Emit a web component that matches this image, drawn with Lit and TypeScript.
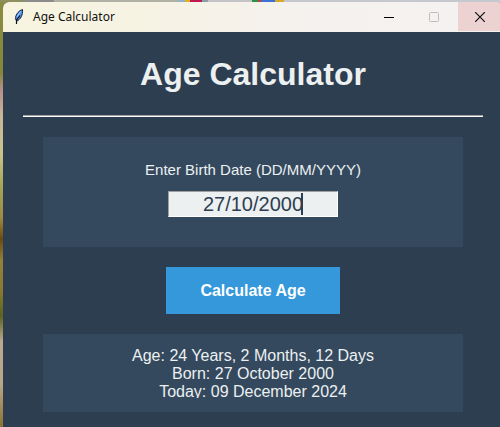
import { LitElement, html, css } from "lit";
import { customElement, state } from "lit/decorators.js";

@customElement("title-bar")
class TitleBar extends LitElement {
  static styles = css`
    :host {
      display: flex;
      height: 30px;
      background: linear-gradient(90deg, #f7f4df 0, #f6f3e3 25%, #f5f1ee 60%, #f4f2f1 100%);
      color: #111;
      font: 12px/30px "Noto Sans", sans-serif;
    }
    .name {
      display: flex;
      flex: 1;
      align-items: center;
      gap: 6px;
      padding-left: 10px;
    }
    button {
      box-sizing: border-box;
      width: 45px;
      padding: 0 4px 0 0;
      border: 0;
      background: none;
      color: #111;
      display: grid;
      place-items: center;
    }
    .close {
      height: 29px;
      padding-right: 2px;
      background: #edd2d2;
    }
    svg {
      display: block;
    }
  `;
  render() {
    return html`
      <div class="name">
        <svg width="14" height="18" viewBox="0 0 14 18" aria-hidden="true">
          <path d="M9.500 1.500 C6 2.500 3 6 2.500 9.500 C2.300 11 2.800 12.500 4 13 C7.500 11.500 10 7 9.500 1.500Z" fill="#4f95ee" stroke="#182336"/>
          <path d="M7.500 3.500 L4 9" stroke="#b5d6ff"/>
          <path d="M7 7.500 L3.500 12 V16" fill="none" stroke="#0c1018" stroke-width="1.200"/>
        </svg>
        <span>Age Calculator</span>
      </div>
      <button aria-label="Minimize">
        <svg width="10" height="10" viewBox="0 0 10 10"><path d="M0 5.500H10" stroke="#000" /></svg>
      </button>
      <button aria-label="Maximize" disabled>
        <svg width="10" height="10" viewBox="0 0 10 10"><rect x=".5" y=".5" width="9" height="9" rx="1" fill="none" stroke="#bdbdbc" /></svg>
      </button>
      <button class="close" aria-label="Close">
        <svg width="10" height="10" viewBox="0 0 10 10"><path d="M0 0L10 10M10 0L0 10" stroke="#111" stroke-width="1.200" /></svg>
      </button>
    `;
  }
}

@customElement("app-root")
class AppRoot extends LitElement {
  @state() private birthDate = "27/10/2000";

  static styles = css`
    :host {
      display: block;
      box-sizing: border-box;
      min-height: 100vh;
      overflow: hidden;
      background: linear-gradient(#8a8d3f 0, #85863c 17%, #b58f88 21%, #c9b59a 27%, #c8c48a 36%, #a3a355 44%, #a08a45 51%, #6a4a12 56%, #94803c 61%, #8a7a30 68%, #5c6420 74%, #bda890 80%, #b8a688 90%, #8a7430 100%);
      font-family: "Liberation Sans", Arial, sans-serif;
    }
    .backdrop {
      height: 2px;
      background: linear-gradient(90deg,
        #8f9060 0 24px, #8c8c8c 24px 54px, #b0b0a4 54px 178px,
        #8fb4c8 178px 185px, #e0b020 185px 190px, #c01850 190px 202px,
        #8aa0a8 202px 208px, #c4c4c8 208px 252px, #2c9048 252px 258px,
        #d03a28 258px 261px, #3a70d8 261px 275px, #d8a828 275px 284px,
        #c6c8d0 284px 100%);
    }
    .window {
      display: flex;
      flex-direction: column;
      min-height: calc(100vh - 2px);
      margin: 0 -3px 0 3px;
      border-radius: 6px 6px 0 0;
      overflow: hidden;
      background: #2c3e50;
      color: #ecf0f1;
    }
    main {
      display: flex;
      flex-direction: column;
      align-items: center;
      padding: 20px 20px 0;
    }
    h1 {
      margin: 0;
      font-size: 32px;
      line-height: 44px;
    }
    hr {
      align-self: stretch;
      height: 0;
      margin: 19px 0 20px;
      border: 0;
      border-top: 1px solid #a0a0a0;
      border-bottom: 1px solid #fff;
    }
    .panel {
      align-self: stretch;
      margin: 0 20px;
      background: #34495e;
      text-align: center;
      font-size: 16px;
    }
    .form {
      display: flex;
      flex-direction: column;
      align-items: center;
      gap: 10px;
      padding: 22px 20px 30px;
    }
    label {
      font-size: 15px;
      line-height: 22px;
    }
    .field {
      position: relative;
      display: flex;
    }
    .field::after {
      content: "";
      position: absolute;
      left: calc(50% + 48px);
      top: 2px;
      bottom: 2px;
      width: 2px;
      background: #2c3e50;
    }
    input {
      box-sizing: border-box;
      width: 170px;
      height: 26px;
      padding: 0;
      border: 1px solid;
      border-color: #a0a0a0 #fff #fff #a0a0a0;
      background: #ecf0f1;
      color: #2c3e50;
      font: 20px/24px "Liberation Sans", Arial, sans-serif;
      text-align: center;
      outline: 0;
    }
    .calculate {
      width: 174px;
      height: 47px;
      margin: 20px 0;
      border: 0;
      background: #3498db;
      color: #fff;
      font: bold 16px "Liberation Sans", Arial, sans-serif;
    }
    .result {
      padding: 13px 0 14px;
    }
    output {
      display: block;
      height: 51px;
      overflow: hidden;
      line-height: 18px;
    }
  `;

  private onInput(e: Event) {
    this.birthDate = (e.target as HTMLInputElement).value;
  }

  render() {
    return html`
      <div class="backdrop"></div>
      <div class="window">
        <title-bar></title-bar>
        <main>
          <h1>Age Calculator</h1>
          <hr />
          <section class="panel form">
            <label for="birth">Enter Birth Date (DD/MM/YYYY)</label>
            <div class="field">
              <input id="birth" .value=${this.birthDate} @input=${this.onInput} />
            </div>
          </section>
          <button class="calculate">Calculate Age</button>
          <section class="panel result">
            <output for="birth">Age: 24 Years, 2 Months, 12 Days<br />Born: 27 October 2000<br />Today: 09 December 2024</output>
          </section>
        </main>
      </div>
    `;
  }
}
